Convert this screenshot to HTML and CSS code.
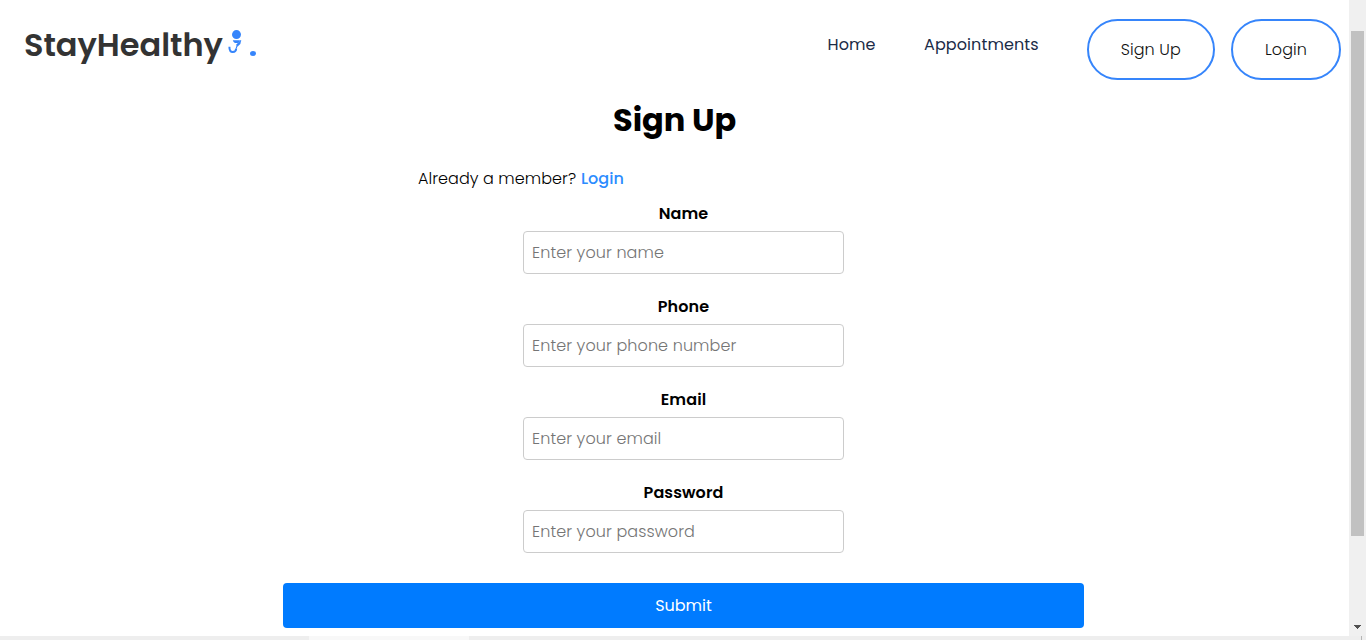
FILE: index.html
```html
<!DOCTYPE html>
<html lang="en">
<head>
<meta charset="utf-8">
<title>StayHealthy</title>
<link rel="stylesheet" href="styles.css">
</head>
<body>
<div class="viewport">
  <div class="page">
    <nav class="navbar">
      <a class="logo"><span class="brand">StayHealthy</span><svg class="logo-icon" width="15" height="26" viewBox="0 0 15 26"><circle cx="9.500" cy="4.600" r="4.500"/><path d="M5.800 10.200h7.200c-.5 2-1.900 2.900-3.600 2.900s-3.100-.9-3.600-2.900z"/><path class="line" d="M2.400 16.800c-.1 3.600 1.300 5.400 3.400 5.300 2.200-.1 3.300-1.600 3.400-3.600"/><path class="thin" d="M9.200 18.500c.1-1.800 1-2.700 2.200-3.500 1.400-.9 2-1.900 2-4M9.400 15.500l4.600-5.200"/></svg><span class="dot"></span></a>
      <div class="links">
        <a class="link home">Home</a>
        <a class="link appointments">Appointments</a>
        <button class="pill signup">Sign Up</button>
        <button class="pill login">Login</button>
      </div>
    </nav>
    <main class="content">
      <h1 class="title"><span>Sign Up</span></h1>
      <p class="member"><span class="member-text">Already a member?</span><a class="member-link">Login</a></p>
      <form class="form">
        <div class="field"><label class="label">Name</label><input class="input" type="text" placeholder="Enter your name"></div>
        <div class="field"><label class="label">Phone</label><input class="input" type="tel" placeholder="Enter your phone number"></div>
        <div class="field"><label class="label">Email</label><input class="input" type="email" placeholder="Enter your email"></div>
        <div class="field"><label class="label">Password</label><input class="input" type="password" placeholder="Enter your password"></div>
        <button class="submit" type="button">Submit</button>
      </form>
    </main>
  </div>
  <div class="scrollbar"><div class="thumb"></div><svg class="arrow" width="7" height="4" viewBox="0 0 7 4" shape-rendering="crispEdges"><path d="M0 0h7v1H6v1H5v1H4v1H3V3H2V2H1V1H0z"/></svg></div>
</div>
<div class="strip"><div class="strip-tab"></div><div class="strip-mark"></div></div>
</body>
</html>
```
FILE: styles.css
```css
* { box-sizing: border-box; }
body {
  margin: 0;
  height: 640px;
  overflow: hidden;
  display: flex;
  flex-direction: column;
  background: #fff;
  color: #000;
  font: 300 16px/24px Poppins, Inter, "Liberation Sans", sans-serif;
  font-feature-settings: "cv11";
}
button, input { font: inherit; font-feature-settings: inherit; }
.viewport { display: flex; height: 636px; }
.page { width: 1349px; }
.navbar { display: flex; justify-content: space-between; height: 99px; padding: 19px 7.6px 0 24px; }
.logo { display: flex; height: 51px; color: #333; font-weight: 600; font-size: 32px; line-height: 51px; letter-spacing: -0.03px; }
.brand { width: 203px; white-space: nowrap; }
.logo-icon { margin-top: 11px; fill: #3685fb; }
.line, .thin { fill: none; stroke: #3685fb; stroke-width: 2; }
.thin { stroke-width: 1.2; }
.dot { width: 6px; height: 5px; margin: 32px 0 0 8.4px; border-radius: 50%; background: #3685fb; }
.links { display: flex; }
.link { line-height: 51px; font-weight: 400; color: #1b2c47; white-space: nowrap; letter-spacing: 0.1px; }
.home { width: 96.5px; }
.appointments { width: 162.9px; }
.pill { height: 61px; padding: 0; border: 2px solid #3685fb; border-radius: 31px; background: #fff; color: #111; letter-spacing: 0.08px; }
.signup { width: 127.7px; margin-right: 16px; }
.login { width: 110.8px; }
.title { margin: 0; padding-left: 613px; font-size: 32px; font-weight: 700; line-height: 42px; letter-spacing: -0.05px; }
.member { display: flex; margin: 0; padding: 26px 0 0 418px; white-space: nowrap; }
.member-text { width: 163px; letter-spacing: 0.06px; }
.member-link { color: #2b8cff; font-weight: 500; }
.form { display: flex; flex-direction: column; align-items: center; width: 801px; margin: 11px 0 0 283px; }
.field { display: flex; flex-direction: column; align-items: center; height: 93px; }
.label { font-weight: 600; margin-bottom: 5px; line-height: 24px; letter-spacing: 0.1px; }
.input { width: 321px; height: 43px; padding: 0 8px; border: 1px solid #ccc; border-radius: 4px; background: #fff; letter-spacing: 0.1px; }
.input::placeholder { color: #757575; opacity: 1; }
.submit { width: 801px; height: 45px; margin-top: 9px; padding: 0; border: 0; border-radius: 4px; background: #007bff; color: #fff; font-weight: 400; }
.scrollbar { display: flex; flex-direction: column; justify-content: space-between; width: 17px; padding: 31px 2px 7px; background: #f0f0f0; }
.thumb { width: 13px; height: 505px; background: #c1c1c1; }
.arrow { margin-left: 3px; fill: #505050; }
.strip { display: flex; height: 4px; padding-left: 309px; background: #eee; }
.strip-tab { width: 160px; background: #f8f8f8; }
.strip-mark { width: 1px; margin-left: 892px; background: #b5b5b5; }
```
